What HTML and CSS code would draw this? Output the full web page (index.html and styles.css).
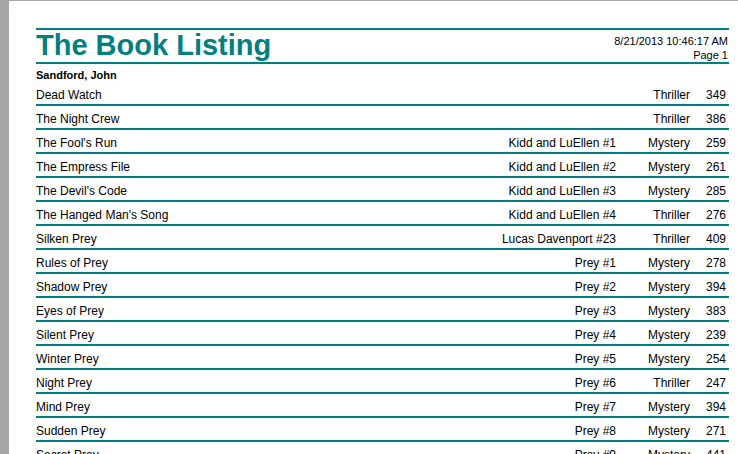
FILE: index.html
```html
<!DOCTYPE html>
<html>
<head>
<meta charset="utf-8">
<link rel="stylesheet" href="styles.css">
</head>
<body>
<div class="page">
  <div class="report-header">
    <h1 class="title">The Book Listing</h1>
    <div class="meta">
      <div class="date">8/21/2013 10:46:17 AM</div>
      <div class="pageno">Page 1</div>
    </div>
  </div>
  <div class="author">Sandford, John</div>
  <div class="rows">
    <div class="row"><span class="c-title">Dead Watch</span><span class="c-series"></span><span class="c-genre">Thriller</span><span class="c-pages">349</span></div>
    <div class="row"><span class="c-title">The Night Crew</span><span class="c-series"></span><span class="c-genre">Thriller</span><span class="c-pages">386</span></div>
    <div class="row"><span class="c-title">The Fool's Run</span><span class="c-series">Kidd and LuEllen #1</span><span class="c-genre">Mystery</span><span class="c-pages">259</span></div>
    <div class="row"><span class="c-title">The Empress File</span><span class="c-series">Kidd and LuEllen #2</span><span class="c-genre">Mystery</span><span class="c-pages">261</span></div>
    <div class="row"><span class="c-title">The Devil's Code</span><span class="c-series">Kidd and LuEllen #3</span><span class="c-genre">Mystery</span><span class="c-pages">285</span></div>
    <div class="row"><span class="c-title">The Hanged Man's Song</span><span class="c-series">Kidd and LuEllen #4</span><span class="c-genre">Thriller</span><span class="c-pages">276</span></div>
    <div class="row"><span class="c-title">Silken Prey</span><span class="c-series">Lucas Davenport #23</span><span class="c-genre">Thriller</span><span class="c-pages">409</span></div>
    <div class="row"><span class="c-title">Rules of Prey</span><span class="c-series">Prey #1</span><span class="c-genre">Mystery</span><span class="c-pages">278</span></div>
    <div class="row"><span class="c-title">Shadow Prey</span><span class="c-series">Prey #2</span><span class="c-genre">Mystery</span><span class="c-pages">394</span></div>
    <div class="row"><span class="c-title">Eyes of Prey</span><span class="c-series">Prey #3</span><span class="c-genre">Mystery</span><span class="c-pages">383</span></div>
    <div class="row"><span class="c-title">Silent Prey</span><span class="c-series">Prey #4</span><span class="c-genre">Mystery</span><span class="c-pages">239</span></div>
    <div class="row"><span class="c-title">Winter Prey</span><span class="c-series">Prey #5</span><span class="c-genre">Mystery</span><span class="c-pages">254</span></div>
    <div class="row"><span class="c-title">Night Prey</span><span class="c-series">Prey #6</span><span class="c-genre">Thriller</span><span class="c-pages">247</span></div>
    <div class="row"><span class="c-title">Mind Prey</span><span class="c-series">Prey #7</span><span class="c-genre">Mystery</span><span class="c-pages">394</span></div>
    <div class="row"><span class="c-title">Sudden Prey</span><span class="c-series">Prey #8</span><span class="c-genre">Mystery</span><span class="c-pages">271</span></div>
    <div class="row"><span class="c-title">Secret Prey</span><span class="c-series">Prey #9</span><span class="c-genre">Mystery</span><span class="c-pages">441</span></div>
  </div>
</div>
</body>
</html>
```

FILE: styles.css
```css
html, body {
  margin: 0;
  padding: 0;
  height: 100%;
  overflow: hidden;
}
body {
  background: #ffffff;
  border-left: 9px solid #a7a5a7;
  border-top: 1px solid #a7a5a7;
  box-sizing: border-box;
  font-family: "Liberation Sans", Arial, sans-serif;
  color: #000000;
}
.page {
  padding: 27px 9px 0 27px;
}
.report-header {
  display: flex;
  justify-content: space-between;
  height: 32px;
  border-top: 2px solid #008080;
  border-bottom: 2px solid #008080;
}
.title {
  margin: 0;
  font-size: 29px;
  line-height: 30px;
  font-weight: bold;
  color: #008080;
}
.meta {
  display: flex;
  flex-direction: column;
  align-items: flex-end;
  padding-top: 4px;
  padding-right: 1px;
  font-size: 11px;
  line-height: 14px;
}
.pageno {
  line-height: 15px;
}
.author {
  font-size: 11px;
  font-weight: bold;
  line-height: 16px;
  height: 15px;
  padding-top: 3px;
}
.row {
  display: grid;
  grid-template-columns: 1fr 200px 74px 36px;
  padding-right: 3px;
  padding-top: 2px;
  height: 20px;
  line-height: 22px;
  font-size: 12px;
  border-bottom: 2px solid #008080;
  white-space: nowrap;
}
.c-series, .c-genre, .c-pages {
  text-align: right;
}
```
